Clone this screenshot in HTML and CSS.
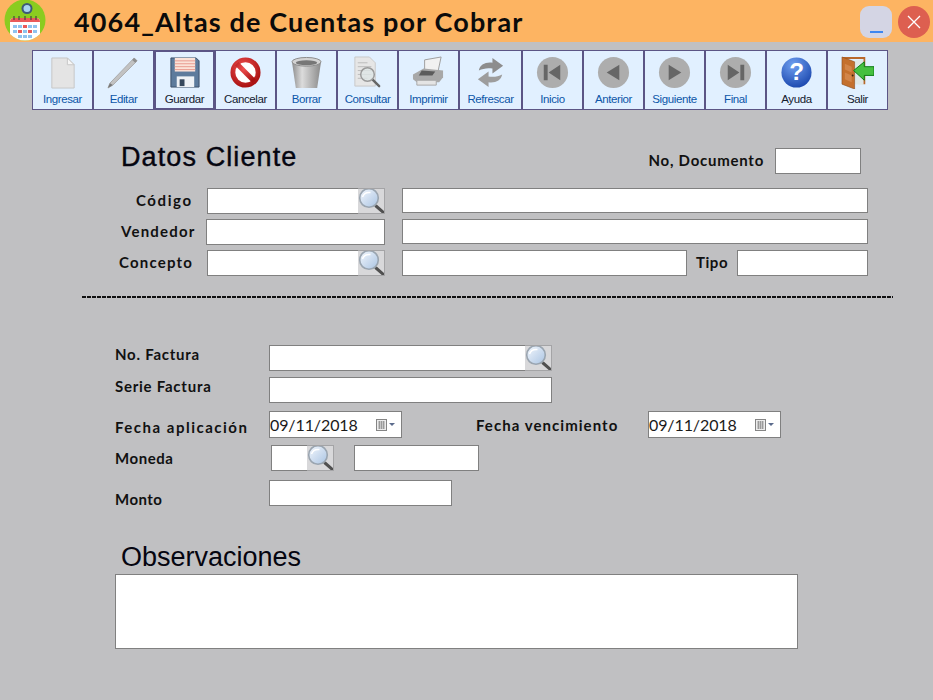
FILE: index.html
```html
<!DOCTYPE html>
<html lang="es">
<head>
  <meta charset="UTF-8" />
  <title>4064_Altas de Cuentas por Cobrar</title>
  <link rel="stylesheet" href="styles.css">
</head>
<body>
  <!-- shared icons -->
  <svg class="defs" width="0" height="0">
    <defs>
      <linearGradient id="glass" x1="0" y1="0" x2="1" y2="1">
        <stop offset="0" stop-color="#f4f8fd"/><stop offset="1" stop-color="#a9c3e2"/>
      </linearGradient>
      <linearGradient id="can" x1="0" y1="0" x2="1" y2="0">
        <stop offset="0" stop-color="#8d8d8d"/><stop offset=".35" stop-color="#dcdcdc"/><stop offset="1" stop-color="#8a8a8a"/>
      </linearGradient>
      <radialGradient id="red" cx=".4" cy=".3" r=".8">
        <stop offset="0" stop-color="#f05050"/><stop offset="1" stop-color="#a81010"/>
      </radialGradient>
      <radialGradient id="blue" cx=".4" cy=".25" r=".85">
        <stop offset="0" stop-color="#6f9ff0"/><stop offset="1" stop-color="#1440a8"/>
      </radialGradient>
      <clipPath id="logo-clip"><circle cx="23" cy="20" r="20.500"/></clipPath>
      <symbol id="lens" viewBox="0 0 27 26">
        <path d="M18 18l8 7" stroke="#505050" stroke-width="3" stroke-linecap="round"/>
        <circle cx="11" cy="10" r="9.300" fill="url(#glass)" stroke="#9aa5b0" stroke-width="1.600"/>
        <path d="M4.500 9c1-3 4-5 8-4.500" fill="none" stroke="#fff" stroke-width="1.500"/>
      </symbol>
      <symbol id="cal" viewBox="0 0 20 12">
        <rect x=".5" y=".5" width="10" height="11" fill="#ececec" stroke="#858585"/>
        <path d="M2 3h7M2 5h7M2 7h7M2 9h7M3.500 2v8M5.500 2v8M7.500 2v8" stroke="#8f8f8f" stroke-width=".8"/>
        <path d="M13 4h6l-3 3z" fill="#5b6b8c"/>
      </symbol>
    </defs>
  </svg>

  <div class="window">
    <div class="titlebar">
      <svg class="logo" viewBox="0 0 46 42">
        <circle cx="23" cy="20" r="20.500" fill="#8bcc20"/>
        <circle cx="25" cy="8.500" r="5.500" fill="#3d5a78"/>
        <circle cx="25" cy="8.500" r="3.500" fill="#a8d4f0"/>
        <g clip-path="url(#logo-clip)">
          <path d="M8 22a4 4 0 0 1 3-4h24a4 4 0 0 1 3 4v20H8z" fill="#fff"/>
          <path d="M8 22a4 4 0 0 1 3-4h24a4 4 0 0 1 3 4z" fill="#ea5a5a"/>
          <path d="M12 16v4M17 16v4M23 16v4M29 16v4M34 16v4" stroke="#444" stroke-width="1.200"/>
          <g fill="#8fc3ee">
            <rect x="11" y="25" width="4" height="3"/><rect x="16" y="25" width="4" height="3"/><rect x="21" y="25" width="4" height="3" fill="#ea5a5a"/><rect x="26" y="25" width="4" height="3"/><rect x="31" y="25" width="4" height="3"/>
            <rect x="11" y="30" width="4" height="3"/><rect x="16" y="30" width="4" height="3" fill="#ea5a5a"/><rect x="21" y="30" width="4" height="3"/><rect x="26" y="30" width="4" height="3" fill="#ea5a5a"/><rect x="31" y="30" width="4" height="3"/>
            <rect x="16" y="35" width="4" height="3"/><rect x="21" y="35" width="4" height="3"/><rect x="26" y="35" width="4" height="3"/>
          </g>
        </g>
      </svg>
      <h1 class="title">4064_Altas de Cuentas por Cobrar</h1>
      <div class="win-buttons">
        <button class="win-btn min"><span></span></button>
        <button class="win-btn close">
          <svg viewBox="0 0 14 14" width="14" height="14"><path d="M1 1l12 12M13 1L1 13" stroke="#fff" stroke-width="1.300"/></svg>
        </button>
      </div>
    </div>

    <div class="toolbar">
      <a class="tool">
        <svg viewBox="0 0 34 34"><path d="M6 2h16l7 7v24H6z" fill="#e4e4e4" stroke="#c6c6c6"/><path d="M22 2v7h7z" fill="#f6f6f6" stroke="#c6c6c6"/></svg>
        <span>Ingresar</span>
      </a>
      <a class="tool">
        <svg viewBox="0 0 34 34"><path d="M28 2l3 3L6 30l-5 3 2-5z" fill="#c2c2c2" stroke="#a8a8a8"/><path d="M28 2l3 3-2 2-3-3z" fill="#8e8e8e"/><path d="M3 28l3 2-5 3z" fill="#777"/></svg>
        <span>Editar</span>
      </a>
      <a class="tool selected">
        <svg viewBox="0 0 34 34"><path d="M3 2h26l3 3v27H3z" fill="#5d7b9c" stroke="#3c5068"/><rect x="7" y="2" width="21" height="14" fill="#fbe2d8"/><path d="M7 5h21M7 8h21M7 11h21M7 14h21" stroke="#e79a8e"/><rect x="9" y="21" width="18" height="11" fill="#eef2f6"/><rect x="12" y="24" width="5" height="7" fill="#36485c"/></svg>
        <span>Guardar</span>
      </a>
      <a class="tool dark">
        <svg viewBox="0 0 34 34"><circle cx="17" cy="17" r="13" fill="#fff" stroke="url(#red)" stroke-width="5"/><path d="M8 8l18 18" stroke="url(#red)" stroke-width="5"/></svg>
        <span>Cancelar</span>
      </a>
      <a class="tool">
        <svg viewBox="0 0 34 34"><path d="M2 6l4 27h22l4-27z" fill="url(#can)"/><ellipse cx="17" cy="6" rx="15" ry="4.500" fill="#d4d4d4" stroke="#8a8a8a"/><ellipse cx="17" cy="7" rx="11" ry="2.500" fill="#777"/></svg>
        <span>Borrar</span>
      </a>
      <a class="tool">
        <svg viewBox="0 0 34 34"><path d="M4 1h15l6 6v24H4z" fill="#e6e6e6" stroke="#c8c8c8"/><path d="M7 7h10M7 11h14M7 15h14M7 19h14M7 23h10" stroke="#bbb"/><path d="M22 24l7 7" stroke="#666" stroke-width="2.500" stroke-linecap="round"/><circle cx="17" cy="19" r="7" fill="#dfe6e6" fill-opacity=".8" stroke="#9a9a9a" stroke-width="1.500"/></svg>
        <span>Consultar</span>
      </a>
      <a class="tool">
        <svg viewBox="0 0 34 34"><path d="M13 4l17-3-3 14-14 2z" fill="#f1f1f1" stroke="#9d9d9d"/><path d="M1 19l11-6 20 2v7l-4 5H5l-4-3z" fill="#a8a8a8"/><path d="M10 15l14 1-3 4H7z" fill="#5b5b5b"/><path d="M5 25h20v5H5z" fill="#e4e4e4" stroke="#a8a8a8"/></svg>
        <span>Imprimir</span>
      </a>
      <a class="tool wide">
        <svg viewBox="0 0 34 34"><path d="M5 15c1-6 7-9 14-8V2l11 8-11 8v-5c-5-1-10 0-14 2z" fill="#8d8d8d"/><path d="M29 19c-1 6-7 9-14 8v5L4 24l11-8v5c5 1 10 0 14-2z" fill="#9d9d9d"/></svg>
        <span>Refrescar</span>
      </a>
      <a class="tool">
        <svg viewBox="0 0 34 34"><circle cx="17" cy="17" r="16" fill="#adadad"/><path d="M8 9h4v16H8zM25 9v16L13 17z" fill="#666"/></svg>
        <span>Inicio</span>
      </a>
      <a class="tool">
        <svg viewBox="0 0 34 34"><circle cx="17" cy="17" r="16" fill="#adadad"/><path d="M23 9v16L10 17z" fill="#666"/></svg>
        <span>Anterior</span>
      </a>
      <a class="tool">
        <svg viewBox="0 0 34 34"><circle cx="17" cy="17" r="16" fill="#adadad"/><path d="M11 9v16l13-8z" fill="#666"/></svg>
        <span>Siguiente</span>
      </a>
      <a class="tool">
        <svg viewBox="0 0 34 34"><circle cx="17" cy="17" r="16" fill="#adadad"/><path d="M9 9v16l12-8zM22 9h4v16h-4z" fill="#666"/></svg>
        <span>Final</span>
      </a>
      <a class="tool dark">
        <svg viewBox="0 0 34 34"><circle cx="17" cy="17" r="15.500" fill="url(#blue)"/><text x="17" y="25" class="help-mark">?</text></svg>
        <span>Ayuda</span>
      </a>
      <a class="tool dark">
        <svg viewBox="0 0 34 34"><path d="M1 1h24v28h-2V3H3z" fill="#b8682c"/><path d="M23 3v27l-9-1V5z" fill="#dfe8e8"/><path d="M1 1l13 5v28L1 29z" fill="#c4702e" stroke="#8a4a1c" stroke-width=".6"/><path d="M4 8l7 3v6l-7-3zM4 17l7 3v7l-7-3z" fill="#d2854a"/><circle cx="12" cy="20" r="1" fill="#3a2410"/><path d="M13 15l11-9v5h10v9H24v5z" fill="#46c040" stroke="#0c7a14"/></svg>
        <span>Salir</span>
      </a>
    </div>

    <div class="form">
      <section class="client">
        <div class="client-head">
          <h2 class="heading">Datos Cliente</h2>
          <label class="lbl doc-lbl">No, Documento</label>
          <input class="field doc" type="text">
        </div>
        <div class="row r-codigo">
          <label class="lbl top-lbl lbl-codigo">Código</label>
          <div class="lookup w-178"><input class="field" type="text"><span class="lookup-btn"><svg><use href="#lens"/></svg></span></div>
          <input class="field w-466" type="text">
        </div>
        <div class="row r-vendedor">
          <label class="lbl top-lbl lbl-vendedor">Vendedor</label>
          <input class="field w-179" type="text">
          <input class="field w-466" type="text">
        </div>
        <div class="row r-concepto">
          <label class="lbl top-lbl lbl-concepto">Concepto</label>
          <div class="lookup w-178"><input class="field" type="text"><span class="lookup-btn"><svg><use href="#lens"/></svg></span></div>
          <input class="field w-285" type="text">
          <label class="lbl top-lbl lbl-tipo">Tipo</label>
          <input class="field w-131" type="text">
        </div>
      </section>

      <div class="dashes"></div>

      <section class="invoice">
        <div class="row2 r-factura">
          <label class="lbl col-lbl">No. Factura</label>
          <div class="lookup w-283"><input class="field" type="text"><span class="lookup-btn"><svg><use href="#lens"/></svg></span></div>
        </div>
        <div class="row2 r-serie">
          <label class="lbl col-lbl">Serie Factura</label>
          <input class="field w-283" type="text">
        </div>
        <div class="row2 r-fecha">
          <label class="lbl col-lbl low">Fecha aplicación</label>
          <div class="date">09/11/2018<svg><use href="#cal"/></svg></div>
          <label class="lbl venc-lbl">Fecha vencimiento</label>
          <div class="date">09/11/2018<svg><use href="#cal"/></svg></div>
        </div>
        <div class="row2 r-moneda">
          <label class="lbl col-lbl moneda-lbl">Moneda</label>
          <div class="lookup w-63"><input class="field" type="text"><span class="lookup-btn"><svg><use href="#lens"/></svg></span></div>
          <input class="field w-125" type="text">
        </div>
        <div class="row2 r-monto">
          <label class="lbl col-lbl monto-lbl">Monto</label>
          <input class="field w-183" type="text">
        </div>
      </section>

      <section class="notes">
        <h2 class="heading light">Observaciones</h2>
        <textarea class="field notes-box"></textarea>
      </section>
    </div>
  </div>
</body>
</html>
```

FILE: styles.css
```css
html, body {
  margin: 0;
  padding: 0;
}

body {
  width: 933px;
  height: 700px;
  overflow: hidden;
  background: #c0c0c2;
  font-family: "Lato", "Liberation Sans", sans-serif;
  color: #111;
}

.defs {
  position: absolute;
}

/* Title bar */
.titlebar {
  height: 42px;
  background: #fdb462;
  display: flex;
  align-items: center;
}

.logo {
  width: 46px;
  height: 42px;
  margin-left: 2px;
  flex: none;
}

.title {
  margin: 0 0 0 26px;
  font-size: 27px;
  font-weight: 700;
  letter-spacing: 1.15px;
  color: #0b0b0b;
}

.win-buttons {
  margin-left: auto;
  margin-right: 3px;
  display: flex;
  gap: 6px;
  align-self: flex-start;
  padding-top: 6px;
}

.win-btn {
  width: 32px;
  height: 32px;
  border: 0;
  padding: 0;
  display: flex;
  align-items: center;
  justify-content: center;
}

.win-btn.min {
  background: #d4d5e4;
  border-radius: 9px;
}

.win-btn.min span {
  display: block;
  width: 13px;
  height: 2px;
  background: #3d86f0;
  margin-top: 20px;
}

.win-btn.close {
  background: #dd5f50;
  border-radius: 50%;
}

/* Toolbar */
.toolbar {
  display: flex;
  margin: 8px 0 0 32px;
  height: 60px;
}

.tool {
  width: 61px;
  height: 60px;
  box-sizing: border-box;
  background: #e1f0ff;
  border: 1px solid #5b5585;
  display: flex;
  flex-direction: column;
  align-items: center;
  color: #0c56a8;
  font-family: "Liberation Sans", sans-serif;
  font-size: 11.5px;
  letter-spacing: -.4px;
  flex: none;
}

.tool.wide {
  width: 63px;
}

.tool svg {
  width: 33px;
  height: 33px;
  margin-top: 5px;
}

.tool span {
  margin-top: 3px;
  line-height: 14px;
}

.tool.dark {
  color: #14202e;
}

.tool.selected {
  color: #14202e;
  border-width: 2px;
}

.tool.selected svg {
  margin-top: 4px;
}

.help-mark {
  font-family: "Liberation Sans", sans-serif;
  font-size: 25px;
  font-weight: 700;
  fill: #fff;
  text-anchor: middle;
}

/* Form */
.form {
  padding-top: 38px;
}

.lbl {
  font-size: 15px;
  font-weight: 700;
  letter-spacing: .55px;
  color: #111;
  white-space: nowrap;
}

.field {
  display: block;
  box-sizing: border-box;
  height: 26px;
  margin: 0;
  padding: 0;
  background: #fff;
  border: 1px solid #808080;
  border-radius: 0;
  outline: 0;
}

.heading {
  margin: 0;
  font-family: "Liberation Sans", sans-serif;
  font-size: 27px;
  font-weight: 400;
  letter-spacing: 1.1px;
  color: #050510;
  -webkit-text-stroke: .4px #050510;
}

.heading.light {
  letter-spacing: 0;
  -webkit-text-stroke: 0;
}

.client-head {
  display: flex;
  align-items: center;
  height: 26px;
  padding-left: 121px;
}

.client-head .heading {
  margin-bottom: 8px;
}

.doc-lbl {
  margin-bottom: 2px;
  letter-spacing: .75px;
  margin-left: auto;
}

.doc {
  width: 86px;
  margin-left: 11px;
  margin-right: 72px;
}

.row {
  display: flex;
  align-items: center;
  height: 26px;
}

.r-codigo {
  margin-top: 14px;
}

.r-vendedor,
.r-concepto {
  margin-top: 5px;
}

.top-lbl {
  margin-bottom: 2px;
  letter-spacing: 1.2px;
}

.lbl-codigo {
  width: 71px;
  margin-left: 136px;
  letter-spacing: 1.6px;
}

.lbl-vendedor {
  width: 85px;
  margin-left: 121px;
}

.lbl-concepto {
  width: 88px;
  margin-left: 119px;
}

.lbl-tipo {
  width: 41px;
  margin-left: 9px;
  letter-spacing: .55px;
}

.lookup {
  display: flex;
  height: 26px;
  box-sizing: border-box;
  flex: none;
}

.lookup .field {
  flex: 1;
  min-width: 0;
  border-right: 0;
}

.lookup-btn {
  width: 27px;
  height: 26px;
  box-sizing: border-box;
  background: #d8d8da;
  border: 1px solid #a4a4a6;
  border-left: 0;
  flex: none;
  overflow: hidden;
}

.lookup-btn svg {
  display: block;
  width: 27px;
  height: 26px;
  margin-top: -1px;
}

.w-63 { width: 63px; }
.w-125 { width: 125px; }
.w-131 { width: 131px; }
.w-178 { width: 178px; margin-right: 17px; }
.w-179 { width: 179px; margin-right: 17px; }
.w-183 { width: 183px; }
.w-283 { width: 283px; }
.w-285 { width: 285px; }
.w-466 { width: 466px; height: 25px; margin-bottom: 2px; }

.dashes {
  width: 811px;
  height: 2px;
  margin: 20px 0 0 82px;
  background: repeating-linear-gradient(90deg, #111 0 4px, transparent 4px 5px);
}

.invoice {
  padding-top: 47px;
}

.row2 {
  display: flex;
  padding-left: 115px;
  align-items: center;
  height: 26px;
}

.col-lbl {
  width: 154px;
  flex: none;
  margin-top: -8px;
  letter-spacing: .75px;
}

.col-lbl.low {
  margin-top: 4px;
  letter-spacing: 1.5px;
}

.moneda-lbl {
  margin-top: 0;
  letter-spacing: .55px;
}

.monto-lbl {
  margin-top: 12px;
  letter-spacing: .45px;
}

.r-serie {
  margin-top: 6px;
}

.r-fecha {
  margin-top: 8px;
  height: 27px;
}

.r-moneda {
  margin-top: 7px;
}

.r-moneda .w-63 {
  margin-left: 2px;
  margin-right: 20px;
}

.r-monto {
  margin-top: 9px;
}

.date {
  width: 133px;
  height: 27px;
  box-sizing: border-box;
  background: #fff;
  border: 1px solid #808080;
  display: flex;
  align-items: center;
  padding-left: 0;
  font-size: 16px;
  letter-spacing: -.1px;
  color: #1a1a1a;
  flex: none;
}

.date svg {
  width: 20px;
  height: 12px;
  margin-left: auto;
  margin-right: 5px;
}

.venc-lbl {
  width: 172px;
  margin-left: 74px;
  margin-top: 1px;
  letter-spacing: 1.05px;
  flex: none;
}

.notes {
  padding: 35px 0 0 115px;
}

.notes .heading {
  padding-left: 6px;
  line-height: 33px;
}

.notes-box {
  width: 683px;
  height: 75px;
  resize: none;
  margin-top: 0;
}
```
